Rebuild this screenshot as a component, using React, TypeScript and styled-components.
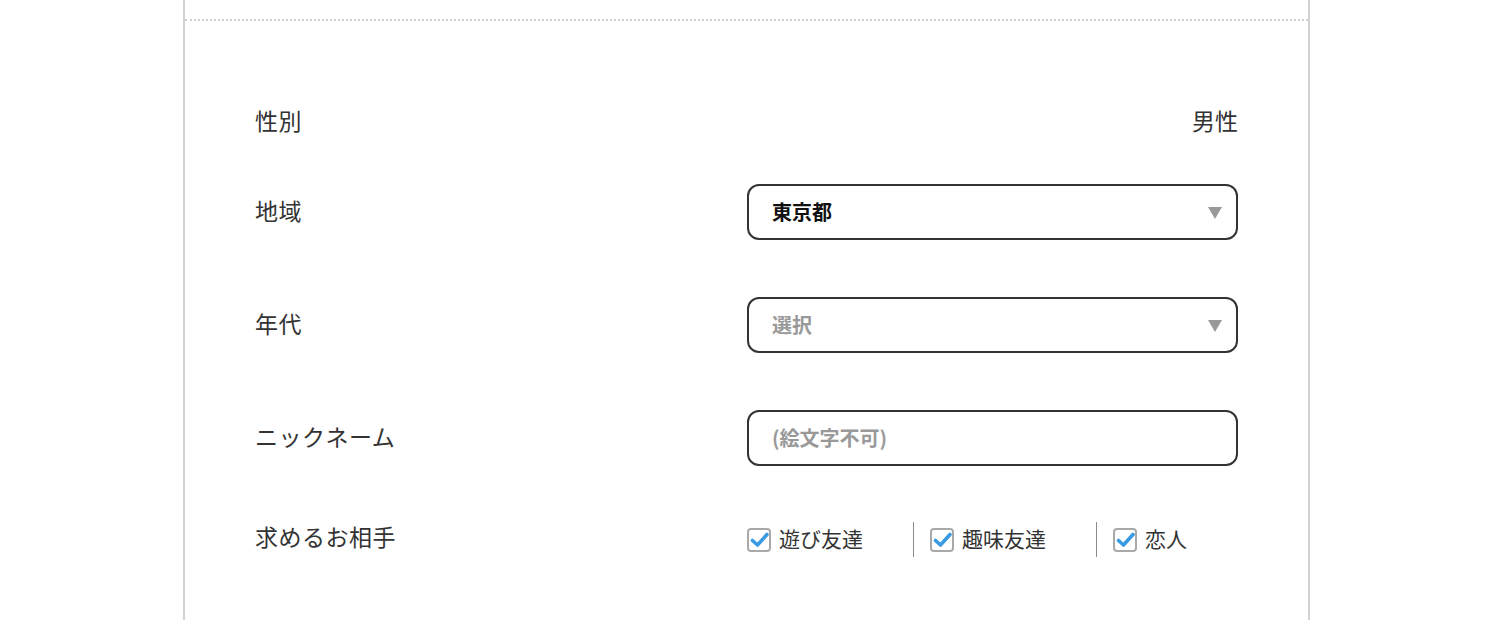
import React from "react";
import styled, { createGlobalStyle } from "styled-components";

const Global = createGlobalStyle`
  html, body { margin: 0; padding: 0; background: #fff; }
  body { font-family: "Noto Sans CJK JP", "Noto Sans", sans-serif; color: #333; }
`;

const Page = styled.div`
  padding-left: 183px;
  height: 620px;
  overflow: hidden;
`;

const Card = styled.div`
  width: 1123px;
  min-height: 620px;
  border-left: 2px solid #d2d2d2;
  border-right: 2px solid #d2d2d2;
  background: #fff;
`;

const TopSection = styled.div`
  height: 19px;
  border-bottom: 2px dotted #cfcfcf;
`;

const Form = styled.div`
  padding: 73px 70px 0 70px;
  display: flex;
  flex-direction: column;
`;

const Row = styled.div<{ $mt: number }>`
  display: flex;
  align-items: center;
  justify-content: space-between;
  height: 56px;
  margin-top: ${(p) => p.$mt}px;
`;

const Label = styled.div`
  font-size: 23px;
  line-height: 1.2;
  padding-bottom: 2px;
  letter-spacing: 0.5px;
  color: #333;
`;

const Value = styled(Label)`
  letter-spacing: 0;
`;

const Field = styled.div<{ $muted?: boolean }>`
  box-sizing: border-box;
  width: 491px;
  height: 56px;
  border: 2px solid #333;
  border-radius: 12px;
  display: flex;
  align-items: center;
  justify-content: space-between;
  padding: 0 14px 2px 23px;
  font-size: 20px;
  font-weight: 700;
  color: ${(p) => (p.$muted ? "#999" : "#111")};
`;

const Arrow = styled.span`
  width: 0;
  height: 0;
  border-left: 7px solid transparent;
  border-right: 7px solid transparent;
  border-top: 12px solid #999;
  margin-top: 4px;
`;

const Checks = styled.div`
  width: 491px;
  display: flex;
  align-items: center;
  padding-top: 2px;
`;

const CheckItem = styled.label<{ $first?: boolean; $last?: boolean }>`
  display: flex;
  align-items: center;
  gap: 8px;
  padding-left: ${(p) => (p.$first ? 0 : 16)}px;
  padding-right: ${(p) => (p.$last ? 0 : 50)}px;
  border-right: ${(p) => (p.$last ? "none" : "1px solid #8a8a8a")};
  height: 35px;
  font-size: 21px;
  color: #333;
  & > span:last-child { padding-bottom: 2px; }
`;

const Box = styled.span`
  position: relative;
  box-sizing: border-box;
  width: 24px;
  height: 24px;
  border: 2px solid #a9a9a9;
  border-radius: 4px;
  background: #fff;
  margin-top: 2px;
  & svg { position: absolute; left: 1px; top: 1px; }
`;

const Check = () => (
  <Box>
    <svg width="20" height="18" viewBox="0 0 20 18">
      <path d="M2.5 9.5 L7.5 14 L17 3.5" fill="none" stroke="#3a9be2" strokeWidth="3.6" strokeLinecap="round" strokeLinejoin="round" />
    </svg>
  </Box>
);

export default function App() {
  const partners = ["遊び友達", "趣味友達", "恋人"];
  return (
    <Page>
      <Global />
      <Card>
        <TopSection />
        <Form>
          <Row $mt={0}>
            <Label>性別</Label>
            <Value>男性</Value>
          </Row>
          <Row $mt={34}>
            <Label>地域</Label>
            <Field>
              東京都
              <Arrow />
            </Field>
          </Row>
          <Row $mt={57}>
            <Label>年代</Label>
            <Field $muted>
              選択
              <Arrow />
            </Field>
          </Row>
          <Row $mt={57}>
            <Label>ニックネーム</Label>
            <Field $muted>(絵文字不可)</Field>
          </Row>
          <Row $mt={44}>
            <Label>求めるお相手</Label>
            <Checks>
              {partners.map((p, i) => (
                <CheckItem key={p} $first={i === 0} $last={i === partners.length - 1}>
                  <Check />
                  <span>{p}</span>
                </CheckItem>
              ))}
            </Checks>
          </Row>
        </Form>
      </Card>
    </Page>
  );
}
